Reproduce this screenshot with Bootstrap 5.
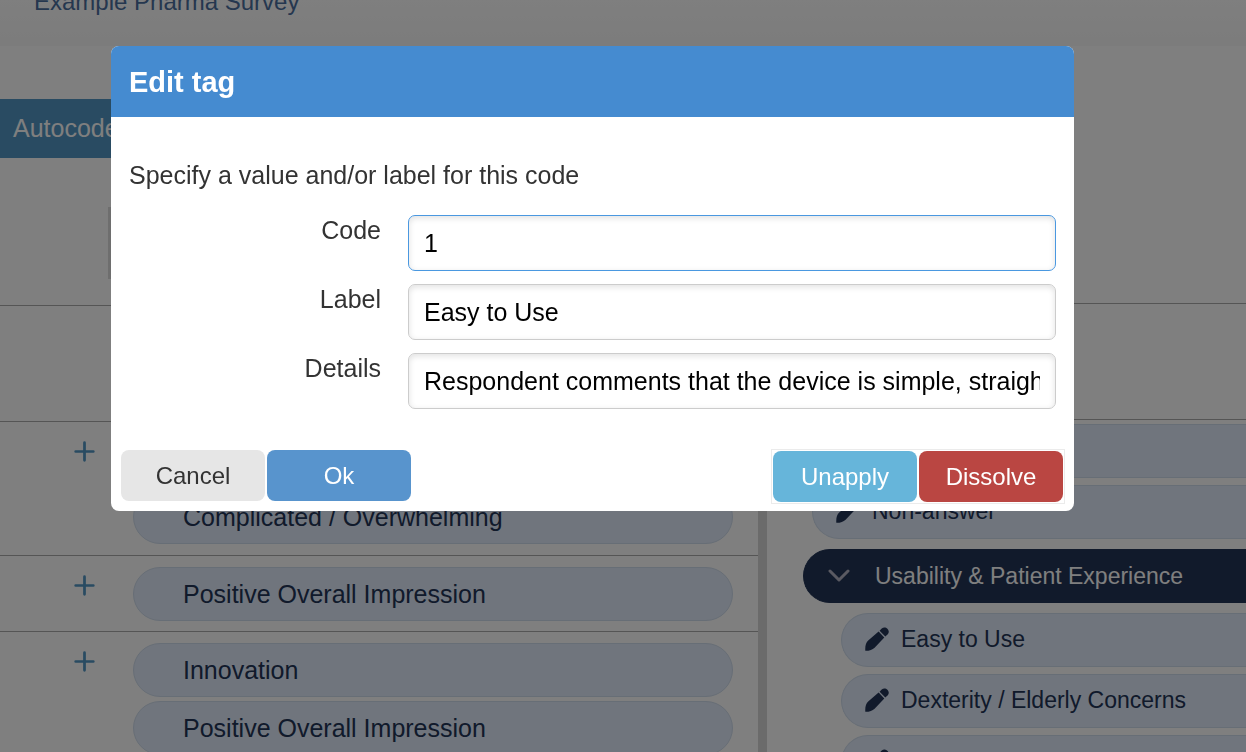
<!DOCTYPE html>
<html lang="en">
<head>
<meta charset="utf-8">
<meta name="viewport" content="width=device-width, initial-scale=1">
<title>Edit tag</title>
<link href="https://cdn.jsdelivr.net/npm/bootstrap@5.3.0/dist/css/bootstrap.min.css" rel="stylesheet">
<style>
  body { font-family: "Liberation Sans", Arial, sans-serif; font-size: 25px; line-height: 32px; color: #333; height: 100vh; overflow: hidden; }
  .top-bar { height: 46px; background: linear-gradient(#fefefe, #f8f8f8); padding: 0 34px; }
  .top-bar a { color: #4b6f9f; font-size: 24px; line-height: 4px; text-decoration: none; }
  .workspace { display: grid; grid-template-columns: minmax(0, 1fr) 9px 479px; }
  .divider-bar { background: #d6d6d6; }
  .toolbar { height: 259px; padding-top: 53px; }
  .btn-auto { background: #5296c4; color: #fff; height: 59px; border: 0; border-radius: 0; padding: 0 13px; font-size: 25px; width: 200px; text-align: left; }
  .filter-box { margin: 49px 0 0 108px; height: 72px; width: 200px; background: #dcdcdc; }
  .response { border-top: 1px solid #aaa; display: grid; grid-template-columns: 133px minmax(0, 1fr); padding: 11px 25px 10px 0; }
  .response-empty { height: 116px; }
  .response-tall { height: 134px; padding-bottom: 11px; }
  .btn-plus { border: 0; background: none; padding: 0 0 0 74px; height: 37px; line-height: 0; }
  .tags { gap: 4px; }
  .pill { height: 54px; flex: none; border-radius: 27px; background: #e0eafa; border: 1px solid #cfdcec; color: #223456; display: flex; align-items: center; }
  .tags .pill { padding-left: 49px; padding-bottom: 1px; }
  .codes-head { height: 257px; }
  .codes-blank { height: 116px; border-top: 1px solid #aaa; }
  .codes-list { border-top: 1px solid #aaa; padding: 4px 0 0 36px; gap: 7px; }
  .codes-list .pill { border-radius: 27px 0 0 27px; border-right: 0; padding: 0 0 3px 23px; gap: 12px; font-size: 23px; }
  .codes-list .pill.lvl-1 { margin-left: 9px; }
  .codes-list .pill.lvl-2 { margin-left: 38px; }
  .codes-list .pill.group-head { background: #223456; border-color: #223456; color: #fff; margin: 3px 0; gap: 25px; padding-left: 24px; padding-bottom: 0; }
  .modal-backdrop.show { opacity: .5; }
  .modal-dialog.tag-dialog { max-width: none; margin: 46px 172px 0 111px; }
  .tag-dialog .modal-content { border: 0; border-radius: 8px; color: #333; }
  .tag-dialog .modal-header { background: #458bd0; color: #fff; height: 71px; padding: 0 18px; border: 0; border-radius: 8px 8px 0 0; }
  .tag-dialog .modal-title { font-size: 29px; font-weight: 700; line-height: 36px; }
  .tag-dialog .modal-body { padding: 42px 18px 40px; }
  .tag-dialog p { margin-bottom: 24px; }
  .field-row { display: grid; grid-template-columns: 279px minmax(0, 1fr); margin-bottom: 13px; }
  .field-row:last-child { margin-bottom: 0; }
  .field-row label { text-align: right; padding-right: 27px; line-height: 30px; }
  .field-row .form-control { height: 56px; border: 1px solid #ccc; border-radius: 7px; padding: 0 15px; font-size: 25px; color: #000; box-shadow: inset 0 2px 6px rgba(0,0,0,.12); }
  .field-row .form-control.active-field { border-color: #4a98e0; }
  .tag-dialog .modal-footer { border: 0; padding: 0 9px 7px 10px; }
  .tag-dialog .modal-footer > * { margin: 0; }
  .pair { gap: 2px; }
  .tag-dialog .pair-plain { margin-bottom: 2px; }
  .pair-boxed { border: 1px solid #ebebeb; padding: 1px; }
  .tag-dialog .btn { width: 144px; height: 51px; border: 0; border-radius: 8px; padding: 0; font-size: 24px; color: #fff; }
  .tag-dialog .btn-cancel { background: #e6e6e6; color: #333; }
  .btn-ok { background: #5894cd; }
  .btn-unapply { background: #66b5da; }
  .btn-dissolve { background: #ba4642; }
</style>
</head>
<body class="d-flex flex-column">
  <svg class="d-none">
    <symbol id="plus" viewBox="0 0 20 20"><path d="M10 1.600v16.800M1.600 10h16.800" fill="none" stroke="#5296c4" stroke-width="2.600" stroke-linecap="round"/></symbol>
    <symbol id="pencil" viewBox="0 0 24 24"><path d="M0.300 23.800C0 18.500 1 15.800 3.200 13.600L13.600 4.600L19.300 10.500L9.600 20.700C7.400 22.800 4.300 23.900.3 23.800ZM14.600 3.700L16.700 1.600C20.500-1.800 26 3.600 22.800 7.200L20.300 9.500Z" fill="#223456"/></symbol>
  </svg>

  <header class="top-bar flex-shrink-0"><a href="#" class="d-block">Example Pharma Survey</a></header>

  <main class="workspace flex-grow-1 overflow-hidden">
    <section class="overflow-hidden">
      <div class="toolbar">
        <button type="button" class="btn btn-auto d-block">Autocode</button>
        <div class="filter-box"></div>
      </div>
      <div class="response response-empty"></div>
      <div class="response response-tall">
        <div><button type="button" class="btn-plus" aria-label="Add tag"><svg width="21" height="21"><use href="#plus"/></svg></button></div>
        <div class="tags d-flex flex-column justify-content-end"><div class="pill">Complicated / Overwhelming</div></div>
      </div>
      <div class="response">
        <div><button type="button" class="btn-plus" aria-label="Add tag"><svg width="21" height="21"><use href="#plus"/></svg></button></div>
        <div class="tags d-flex flex-column"><div class="pill">Positive Overall Impression</div></div>
      </div>
      <div class="response">
        <div><button type="button" class="btn-plus" aria-label="Add tag"><svg width="21" height="21"><use href="#plus"/></svg></button></div>
        <div class="tags d-flex flex-column"><div class="pill">Innovation</div><div class="pill">Positive Overall Impression</div></div>
      </div>
    </section>
    <div class="divider-bar"></div>
    <aside class="overflow-hidden">
      <div class="codes-head"></div>
      <div class="codes-blank"></div>
      <div class="codes-list d-flex flex-column">
        <div class="pill lvl-1"></div>
        <div class="pill lvl-1"><svg width="24" height="24"><use href="#pencil"/></svg>Non-answer</div>
        <div class="pill group-head"><svg width="22" height="14" viewBox="0 0 22 14"><path d="M2 2l9 9 9-9" fill="none" stroke="#b4b4c4" stroke-width="3" stroke-linecap="round" stroke-linejoin="round"/></svg>Usability &amp; Patient Experience</div>
        <div class="pill lvl-2"><svg width="24" height="24"><use href="#pencil"/></svg>Easy to Use</div>
        <div class="pill lvl-2"><svg width="24" height="24"><use href="#pencil"/></svg>Dexterity / Elderly Concerns</div>
        <div class="pill lvl-2"><svg width="24" height="24"><use href="#pencil"/></svg></div>
      </div>
    </aside>
  </main>

  <div class="modal-backdrop show"></div>
  <div class="modal d-block" role="dialog" aria-modal="true" aria-labelledby="tagTitle">
    <div class="modal-dialog tag-dialog">
      <form class="modal-content">
        <div class="modal-header"><h1 class="modal-title" id="tagTitle">Edit tag</h1></div>
        <div class="modal-body">
          <p>Specify a value and/or label for this code</p>
          <div class="field-row"><label for="code">Code</label><input id="code" type="text" class="form-control active-field" value="1"></div>
          <div class="field-row"><label for="label">Label</label><input id="label" type="text" class="form-control" value="Easy to Use"></div>
          <div class="field-row"><label for="details">Details</label><input id="details" type="text" class="form-control" value="Respondent comments that the device is simple, straightforward"></div>
        </div>
        <div class="modal-footer d-flex justify-content-between">
          <div class="pair pair-plain d-flex"><button type="button" class="btn btn-cancel">Cancel</button><button type="button" class="btn btn-ok">Ok</button></div>
          <div class="pair pair-boxed d-flex"><button type="button" class="btn btn-unapply">Unapply</button><button type="button" class="btn btn-dissolve">Dissolve</button></div>
        </div>
      </form>
    </div>
  </div>
<script src="https://cdn.jsdelivr.net/npm/bootstrap@5.3.0/dist/js/bootstrap.bundle.min.js"></script>
</body>
</html>
